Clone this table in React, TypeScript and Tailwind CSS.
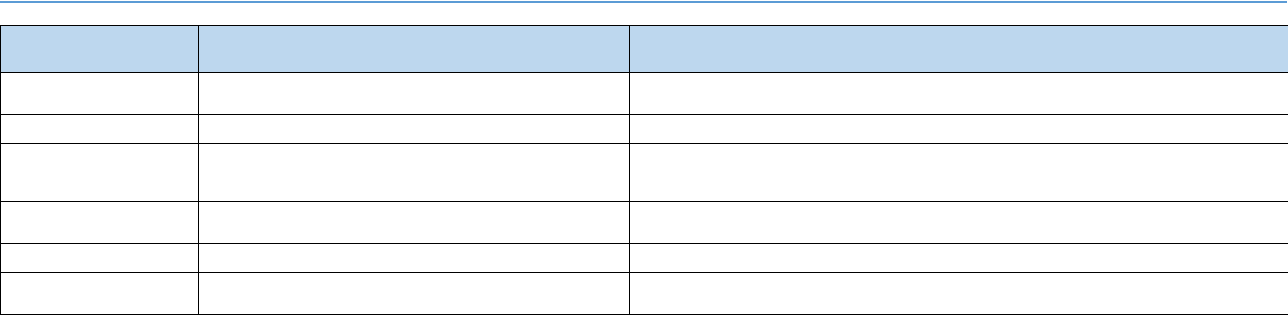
const rows = [42, 29, 58, 42, 29, 42];

function App() {
  return (
    <div className="w-[1288px] h-[315px] bg-white font-['Liberation_Sans',sans-serif]">
      <div className="pt-px">
        <div className="h-[2px] w-[1287px] bg-[#5b9bd5]" />
      </div>
      <table className="mt-[22px] w-[1288px] table-fixed border-collapse">
        <colgroup>
          <col className="w-[198px]" />
          <col className="w-[431px]" />
          <col className="w-[659px]" />
        </colgroup>
        <thead>
          <tr className="h-[47px] bg-[#bdd7ee]">
            <th className="border border-black" />
            <th className="border border-black" />
            <th className="border border-black" />
          </tr>
        </thead>
        <tbody>
          {rows.map((h, i) => (
            <tr key={i} style={{ height: h }}>
              <td className="border border-black" />
              <td className="border border-black" />
              <td className="border border-black" />
            </tr>
          ))}
        </tbody>
      </table>
    </div>
  );
}

export default App;
